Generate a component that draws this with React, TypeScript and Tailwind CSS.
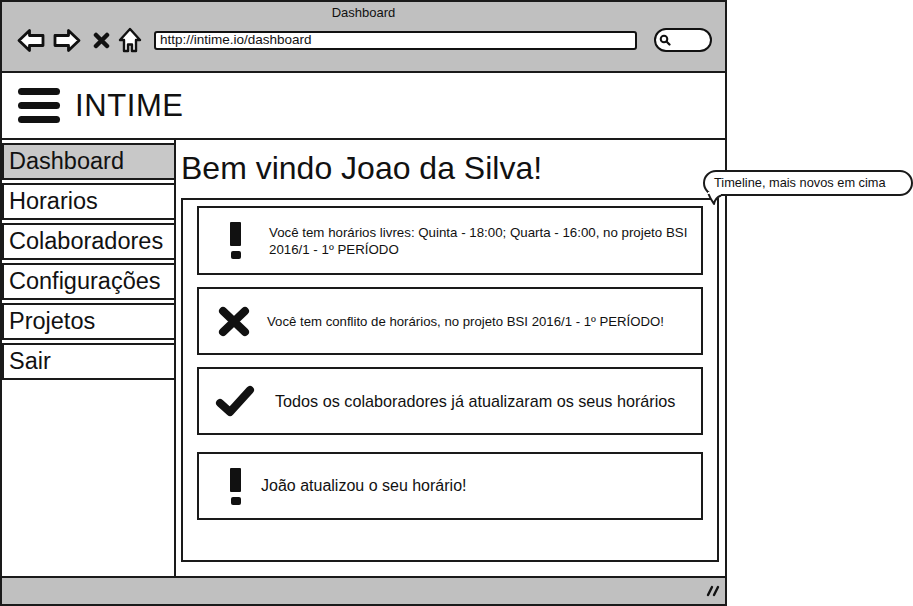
import React from "react";

const MENU = ["Dashboard", "Horarios", "Colaboradores", "Configurações", "Projetos", "Sair"];

// ── Icons ────────────────────────────────────────────────────────────────────

function BackArrow({ flip = false }: { flip?: boolean }) {
  return (
    <svg width="28" height="25" viewBox="0 0 28 25" className={flip ? "-scale-x-100" : ""}>
      <path
        d="M2 12.5 L12.5 2.5 V7.5 H26 V17.5 H12.5 V22.5 Z"
        fill="white"
        stroke="#111"
        strokeWidth="2.8"
        strokeLinejoin="round"
      />
    </svg>
  );
}

function StopIcon() {
  return (
    <svg width="17" height="17" viewBox="0 0 17 17">
      <path d="M3 3 L14 14 M14 3 L3 14" stroke="#111" strokeWidth="4.5" strokeLinecap="round" />
    </svg>
  );
}

function HomeIcon() {
  return (
    <svg width="24" height="26" viewBox="0 0 24 26">
      <path
        d="M12 2 L2 13 H6 V24 H10 V17.5 H14 V24 H18 V13 H22 Z"
        fill="white"
        stroke="#111"
        strokeWidth="2.4"
        strokeLinejoin="round"
      />
    </svg>
  );
}

function Bang() {
  return (
    <div className="flex w-[11px] flex-col items-center gap-[5px]">
      <div className="h-[24px] w-[11px] rounded-[1px] bg-[#111]" />
      <div className="h-[8px] w-[10px] rounded-[2px] bg-[#111]" />
    </div>
  );
}

function Cross() {
  return (
    <svg width="32" height="31" viewBox="0 0 32 31">
      <path d="M5 5 L27 26 M27 5 L5 26" stroke="#111" strokeWidth="8" strokeLinecap="round" />
    </svg>
  );
}

function Check() {
  return (
    <svg width="40" height="32" viewBox="0 0 40 32">
      <path
        d="M5 18 L15 27 L35 5"
        fill="none"
        stroke="#111"
        strokeWidth="8"
        strokeLinecap="round"
        strokeLinejoin="round"
      />
    </svg>
  );
}

// ── Page ─────────────────────────────────────────────────────────────────────

export default function App() {
  return (
    <div className="relative h-[606px] w-[913px] overflow-hidden bg-white font-['Liberation_Sans',Arial,sans-serif] text-[#111]">
      {/* Browser window */}
      <div className="flex h-[606px] w-[727px] flex-col border-2 border-[#1a1a1a]">
        {/* Title bar */}
        <div className="flex h-[71px] flex-col border-b-2 border-[#1a1a1a] bg-[#c0c0c0]">
          <div className="pt-[3px] text-center text-[13px] leading-[16px]">Dashboard</div>
          <div className="mt-[5px] flex h-[28px] items-center pl-[15px]">
            <BackArrow />
            <div className="ml-[8px]">
              <BackArrow flip />
            </div>
            <div className="ml-[12px]">
              <StopIcon />
            </div>
            <div className="mb-[1px] ml-[8px]">
              <HomeIcon />
            </div>
            <div className="ml-[12px] flex h-[19px] w-[483px] items-center rounded-[3px] border-2 border-[#111] bg-white pl-[4px] text-[13.5px] leading-none">
              http://intime.io/dashboard
            </div>
            <div className="ml-[17px] flex h-[24px] w-[58px] items-center rounded-full border-2 border-[#111] bg-white pl-[3px]">
              <svg width="12" height="12" viewBox="0 0 12 12">
                <circle cx="5" cy="5" r="3.3" fill="none" stroke="#111" strokeWidth="2" />
                <path d="M7.5 7.5 L10.5 10.5" stroke="#111" strokeWidth="2.2" strokeLinecap="round" />
              </svg>
            </div>
          </div>
        </div>

        {/* App header */}
        <div className="flex h-[67px] items-center border-b-2 border-[#1a1a1a] pl-[16px]">
          <div className="flex flex-col gap-[7px]">
            <div className="h-[7px] w-[42px] rounded-full bg-[#111]" />
            <div className="h-[7px] w-[42px] rounded-full bg-[#111]" />
            <div className="h-[7px] w-[42px] rounded-full bg-[#111]" />
          </div>
          <div className="ml-[15px] text-[31px] leading-none tracking-[0.6px]">INTIME</div>
        </div>

        {/* Body */}
        <div className="flex flex-1">
          {/* Sidebar */}
          <div className="flex w-[174px] flex-col gap-[3px] border-r-2 border-[#1a1a1a] pt-[3px]">
            {MENU.map((item, i) => (
              <div
                key={item}
                className={`flex h-[37px] items-center border-y-2 border-l-2 border-[#1a1a1a] pl-[5px] text-[23.5px] leading-none ${
                  i === 0 ? "bg-[#c8c8c8]" : "bg-white"
                }`}
              >
                {item}
              </div>
            ))}
          </div>

          {/* Main */}
          <div className="flex-1 pl-[5px] pt-[10px]">
            <div className="text-[32px] leading-[37px]">Bem vindo Joao da Silva!</div>

            <div className="mt-[11px] h-[364px] w-[538px] border-2 border-[#1a1a1a] pl-[14px] pt-[6px]">
              {/* Card 1 */}
              <div className="flex h-[69px] w-[506px] items-center border-2 border-[#1a1a1a] pl-[31px]">
                <Bang />
                <div className="ml-[28px] text-[13.3px] leading-[17px]">
                  Você tem horários livres: Quinta - 18:00; Quarta - 16:00, no projeto BSI
                  <br />
                  2016/1 - 1º PERÍODO
                </div>
              </div>

              {/* Card 2 */}
              <div className="mt-[12px] flex h-[68px] w-[506px] items-center border-2 border-[#1a1a1a] pl-[19px]">
                <Cross />
                <div className="ml-[17px] text-[13.2px] leading-[17px]">
                  Você tem conflito de horários, no projeto BSI 2016/1 - 1º PERÍODO!
                </div>
              </div>

              {/* Card 3 */}
              <div className="mt-[12px] flex h-[68px] w-[506px] items-center border-2 border-[#1a1a1a] pl-[16px]">
                <Check />
                <div className="ml-[20px] text-[16.2px] leading-[20px]">
                  Todos os colaboradores já atualizaram os seus horários
                </div>
              </div>

              {/* Card 4 */}
              <div className="mt-[17px] flex h-[68px] w-[506px] items-center border-2 border-[#1a1a1a] pl-[31px]">
                <Bang />
                <div className="ml-[20px] text-[16px] leading-[20px]">João atualizou o seu horário!</div>
              </div>
            </div>
          </div>
        </div>

        {/* Status bar */}
        <div className="flex h-[28px] items-center justify-end border-t-2 border-[#1a1a1a] bg-[#c0c0c0] pr-[5px]">
          <svg width="14" height="12" viewBox="0 0 14 12">
            <path d="M6 2 L2 10 M12 2 L8 10" stroke="#111" strokeWidth="2.4" strokeLinecap="round" />
          </svg>
        </div>
      </div>

      {/* Annotation bubble */}
      <div className="absolute left-[703px] top-[170px]">
        <div className="flex h-[26px] w-[210px] items-center rounded-[13px] border-2 border-[#1a1a1a] bg-white pl-[9px] text-[12.8px] leading-none">
          Timeline, mais novos em cima
        </div>
        <svg width="18" height="14" viewBox="0 0 18 14" className="absolute left-[4px] top-[22px]">
          <path d="M1 0 L1 2 Q3 6 7 12 Q8 6 14 3 L14 0 Z" fill="white" />
          <path d="M1.5 2 Q3 6 7 12 Q8 6 14 3.5" fill="none" stroke="#1a1a1a" strokeWidth="2" strokeLinejoin="round" />
        </svg>
      </div>
    </div>
  );
}
